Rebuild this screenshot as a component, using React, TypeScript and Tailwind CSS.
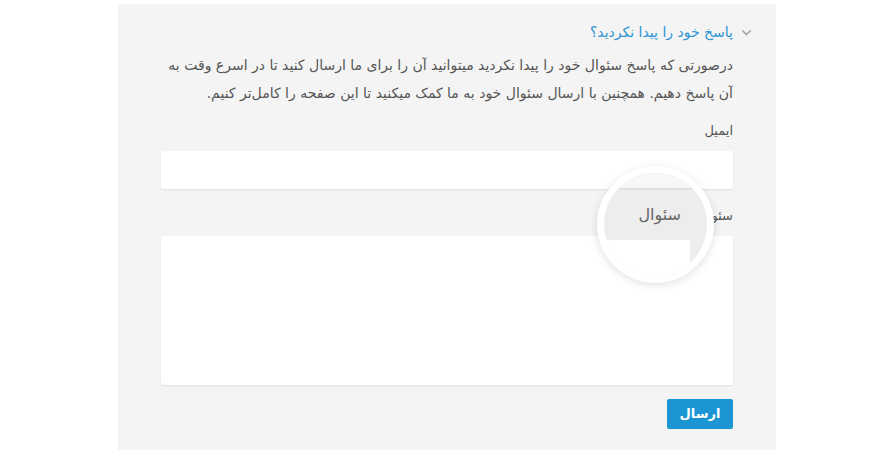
import React from "react";

function Chevron() {
  return (
    <svg width="13" height="13" viewBox="0 0 24 24" fill="none" stroke="#a9a9a9" strokeWidth="3" strokeLinecap="round" strokeLinejoin="round">
      <path d="M5 9l7 7 7-7" />
    </svg>
  );
}

export default function App() {
  const font = { fontFamily: '"DejaVu Sans", "Noto Sans", sans-serif' };
  return (
    <div className="w-[896px] h-[453px] bg-white" style={font}>
      <div dir="rtl" className="relative ml-[118px] mt-[4px] w-[658px] h-[446px] bg-[#f4f4f4] pt-[17px] pl-[43px] pr-[23px]">
        <div className="flex items-center gap-[7px] h-[22px]">
          <Chevron />
          <span className="text-[14px] text-[#2d93d3] leading-[22px]">پاسخ خود را پیدا نکردید؟</span>
        </div>
        <div className="pr-[20px]">
          <p className="mt-[8px] text-[14px] leading-[28px] text-[#555] whitespace-nowrap">
            درصورتی که پاسخ سئوال خود را پیدا نکردید میتوانید آن را برای ما ارسال کنید تا در اسرع وقت به
            <br />
            آن پاسخ دهیم. همچنین با ارسال سئوال خود به ما کمک میکنید تا این صفحه را کامل‌تر کنیم.
          </p>
          <label className="block mt-[15px] text-[13px] leading-[18px] text-[#555]">ایمیل</label>
          <div className="mt-[11px] h-[38px] bg-white rounded-[2px] shadow-[0_1px_2px_rgba(0,0,0,0.08)]"></div>
          <label className="block mt-[18px] text-[13px] leading-[18px] text-[#555]">سئوال</label>
          <div className="mt-[11px] h-[149px] bg-white rounded-[2px] shadow-[0_1px_2px_rgba(0,0,0,0.08)]"></div>
          <div className="flex mt-[14px]">
            <button className="w-[66px] h-[30px] bg-[#1b95d3] text-white text-[13px] font-bold rounded-[2px]">ارسال</button>
          </div>
        </div>

        <div dir="ltr" className="absolute left-[479px] top-[162px] w-[117px] h-[117px] rounded-full border-[7px] border-white bg-[#ededed] overflow-hidden shadow-[0_2px_8px_rgba(0,0,0,0.12)]">
          <div className="absolute left-0 top-0 w-[90px] h-[15px] bg-[#f7f7f7] shadow-[0_1px_2px_rgba(0,0,0,0.1)]"></div>
          <div className="absolute right-[26px] top-[30px] text-[16px] leading-[24px] text-[#666]" dir="rtl">سئوال</div>
          <div className="absolute left-0 top-[67px] w-[86px] h-[60px] bg-white"></div>
        </div>
      </div>
    </div>
  );
}
